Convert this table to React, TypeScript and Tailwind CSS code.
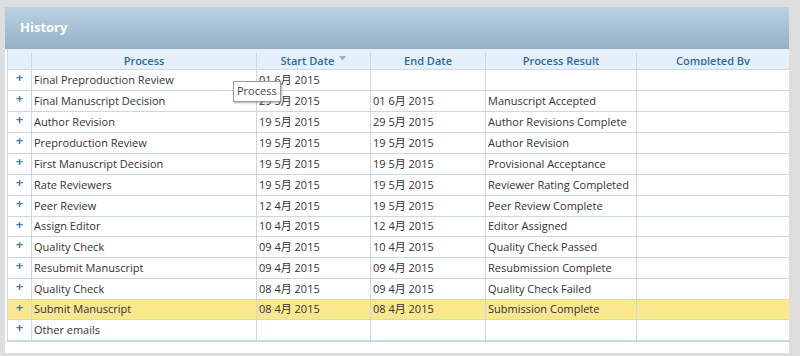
const rows = [
  { process: "Final Preproduction Review", start: "01 6月 2015", end: "", result: "" },
  { process: "Final Manuscript Decision", start: "29 5月 2015", end: "01 6月 2015", result: "Manuscript Accepted" },
  { process: "Author Revision", start: "19 5月 2015", end: "29 5月 2015", result: "Author Revisions Complete" },
  { process: "Preproduction Review", start: "19 5月 2015", end: "19 5月 2015", result: "Author Revision" },
  { process: "First Manuscript Decision", start: "19 5月 2015", end: "19 5月 2015", result: "Provisional Acceptance" },
  { process: "Rate Reviewers", start: "19 5月 2015", end: "19 5月 2015", result: "Reviewer Rating Completed" },
  { process: "Peer Review", start: "12 4月 2015", end: "19 5月 2015", result: "Peer Review Complete" },
  { process: "Assign Editor", start: "10 4月 2015", end: "12 4月 2015", result: "Editor Assigned" },
  { process: "Quality Check", start: "09 4月 2015", end: "10 4月 2015", result: "Quality Check Passed" },
  { process: "Resubmit Manuscript", start: "09 4月 2015", end: "09 4月 2015", result: "Resubmission Complete" },
  { process: "Quality Check", start: "08 4月 2015", end: "09 4月 2015", result: "Quality Check Failed" },
  { process: "Submit Manuscript", start: "08 4月 2015", end: "08 4月 2015", result: "Submission Complete", hi: true },
  { process: "Other emails", start: "", end: "", result: "" },
];

const font = { fontFamily: '"Open Sans", "Noto Sans CJK SC", sans-serif' };

// header labels get their descenders clipped, like the original grid
function HeadLabel({ children }: { children: React.ReactNode }) {
  return <span className="block h-[12px] overflow-hidden leading-[15px]">{children}</span>;
}

export default function App() {
  return (
    <div className="h-[356px] w-[800px] bg-[#dedede] pt-[7px] pl-[5px]" style={font}>
      <div className="w-[784px] bg-white">
        <div className="flex h-[42px] items-center bg-gradient-to-b from-[#bcd2e3] to-[#93b0c8] pl-[15px]">
          <span className="text-[13px] font-bold text-white">History</span>
        </div>
        <div className="relative ml-[2px] w-[782px] border-b-2 border-l border-[#c9dae6]">
          <div className="flex h-[20px] bg-[#e4f0fa] pt-[4px] text-[11px] font-semibold text-[#2e6a9a]">
            <div className="w-[24px] border-r border-[#c9dae6]" />
            <div className="flex w-[225px] justify-center border-r border-[#c9dae6]">
              <HeadLabel>Process</HeadLabel>
            </div>
            <div className="flex w-[114px] justify-center gap-[5px] border-r border-[#c9dae6]">
              <HeadLabel>Start Date</HeadLabel>
              <svg width="7" height="5" viewBox="0 0 7 5" className="mt-[3px]">
                <path d="M0 0 H7 L3.5 4.5 Z" fill="#8fb5d6" />
              </svg>
            </div>
            <div className="flex w-[115px] justify-center border-r border-[#c9dae6]">
              <HeadLabel>End Date</HeadLabel>
            </div>
            <div className="flex w-[151px] justify-center border-r border-[#c9dae6]">
              <HeadLabel>Process Result</HeadLabel>
            </div>
            <div className="flex w-[152px] justify-center">
              <HeadLabel>Completed By</HeadLabel>
            </div>
          </div>
          {rows.map((r, i) => (
            <div
              key={i}
              className={`flex border-t border-[#c9dae6] text-[11px] text-[#333] ${i === 7 || i === 11 ? "h-[20px]" : "h-[21px]"} ${r.hi ? "bg-[#fbe78c]" : "bg-white"}`}
            >
              <div className="flex w-[24px] justify-center border-r border-[#c9dae6] text-[13px] font-bold leading-[14px] text-[#3e7fb8]">+</div>
              <div className="flex w-[225px] items-center border-r border-[#c9dae6] pl-[2px]">{r.process}</div>
              <div className="flex w-[114px] items-center border-r border-[#c9dae6] pl-[2px]">{r.start}</div>
              <div className="flex w-[115px] items-center border-r border-[#c9dae6] pl-[2px]">{r.end}</div>
              <div className="flex w-[151px] items-center border-r border-[#c9dae6] pl-[2px]">{r.result}</div>
              <div className="w-[152px]" />
            </div>
          ))}
          <div className="absolute left-[225px] top-[32px] border border-[#9a9a9a] bg-white px-[3px] py-[1px] text-[11px] text-[#444] shadow-[1px_1px_2px_rgba(0,0,0,0.3)]">
            Process
          </div>
        </div>
        <div className="h-[11px]" />
      </div>
    </div>
  );
}
